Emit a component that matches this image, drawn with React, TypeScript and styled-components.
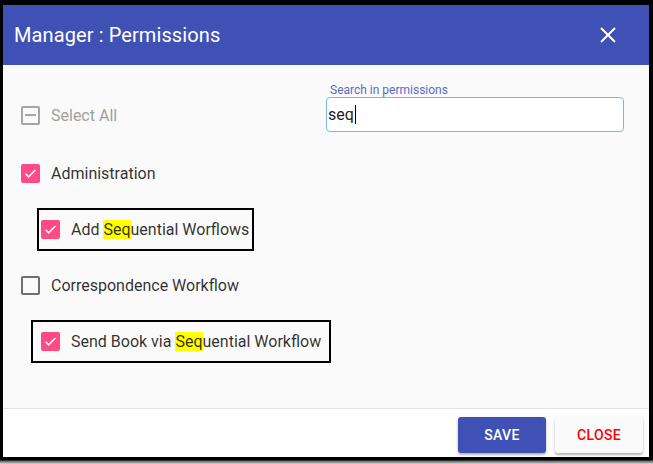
import styled, { createGlobalStyle } from 'styled-components';

const GlobalStyle = createGlobalStyle`
  html, body {
    margin: 0;
    padding: 0;
    background: #000;
    font-family: Roboto, "Liberation Sans", Arial, sans-serif;
  }
`

const Frame = styled.div`
  width: 653px;
  height: 464px;
  display: flex;
  flex-direction: column;
  overflow: hidden;
`

const Dialog = styled.div`
  margin: 5px 4px 0 3px;
  height: 452px;
  display: flex;
  flex-direction: column;
  background: #fafafa;
`

const Shade = styled.div`
  height: 7px;
  background: linear-gradient(#000 0 40%, #6a6a6a 60%, #d8d8d8 100%);
`

const Header = styled.div`
  height: 60px;
  flex-shrink: 0;
  background: #3f51b5;
  display: flex;
  align-items: center;
  justify-content: space-between;
  padding: 0 33px 0 11px;
`

const Title = styled.h2`
  margin: 0;
  color: #fff;
  font-size: 20px;
  font-weight: 400;
  letter-spacing: 0.1px;
`

const CloseIcon = styled.svg`
  width: 16px;
  height: 16px;
  margin-top: -1px;
`

const Body = styled.div`
  flex: 1;
  padding: 19px 25px 0 18px;
  border-bottom: 1px solid #e3e3e3;
  display: flex;
  flex-direction: column;
`

const TopRow = styled.div`
  display: flex;
  justify-content: space-between;
  align-items: flex-start;
`

const Row = styled.div<{ $top: number }>`
  display: flex;
  align-items: center;
  height: 24px;
  margin-top: ${p => p.$top}px;
`

const Marked = styled.div<{ $top: number; $left: number; $width: number }>`
  display: flex;
  align-items: center;
  box-sizing: border-box;
  height: 43px;
  width: ${p => p.$width}px;
  margin-top: ${p => p.$top}px;
  margin-left: ${p => p.$left}px;
  padding-left: ${p => 18 - p.$left}px;
  border: 2px solid #000;
`

const Box = styled.span<{ $state: 'on' | 'off' | 'mixed' }>`
  box-sizing: border-box;
  width: 19px;
  height: 19px;
  flex-shrink: 0;
  border-radius: 2px;
  display: flex;
  align-items: center;
  justify-content: center;
  background: ${p => (p.$state === 'on' ? '#ff4a86' : 'transparent')};
  border: ${p =>
    p.$state === 'on' ? 'none' : p.$state === 'mixed' ? '2px solid #a5a5a5' : '2px solid #6f6f6f'};
`

const Dash = styled.span`
  width: 11px;
  height: 2px;
  background: #a5a5a5;
`

const Label = styled.span<{ $muted?: boolean }>`
  margin-left: 11px;
  font-size: 16px;
  color: ${p => (p.$muted ? '#a0a0a0' : 'rgba(0, 0, 0, 0.82)')};
  white-space: nowrap;
`

const Hit = styled.span`
  background: #ffff00;
`

const Search = styled.div`
  width: 298px;
  display: flex;
  flex-direction: column;
`

const SearchLabel = styled.label`
  font-size: 12px;
  line-height: 13px;
  color: #5a6acb;
  padding-left: 4px;
`

const SearchBox = styled.div`
  box-sizing: border-box;
  height: 35px;
  border: 1px solid #7fb4ea;
  border-radius: 4px;
  background: #fff;
  display: flex;
  align-items: center;
  padding-left: 1px;
  font-size: 16px;
  color: #222;
`

const Caret = styled.span`
  width: 1px;
  height: 19px;
  background: #000;
  margin-left: 1px;
`

const Footer = styled.div`
  box-sizing: border-box;
  height: 48px;
  flex-shrink: 0;
  background: #fff;
  display: flex;
  justify-content: flex-end;
  align-items: flex-start;
  gap: 9px;
  padding: 8px 6px 0 0;
`

const Button = styled.button<{ $primary?: boolean }>`
  width: 88px;
  height: 36px;
  border: none;
  border-radius: 3px;
  font-family: Roboto, "Liberation Sans", Arial, sans-serif;
  font-size: 14px;
  font-weight: 500;
  letter-spacing: 0.3px;
  text-transform: uppercase;
  color: ${p => (p.$primary ? '#fff' : '#ff0000')};
  background: ${p => (p.$primary ? '#3f51b5' : '#fafafa')};
  box-shadow: 0 2px 2px rgba(0, 0, 0, 0.22), 0 1px 4px rgba(0, 0, 0, 0.12);
`

const Check = ({ state }: { state: 'on' | 'off' | 'mixed' }) => (
  <Box $state={state}>
    {state === 'on' && (
      <svg width="13" height="13" viewBox="0 0 24 24">
        <path d="M3 12.5l5.5 5.5L21 5.5" fill="none" stroke="#fff" strokeWidth="3" />
      </svg>
    )}
    {state === 'mixed' && <Dash />}
  </Box>
)

const App: React.FC = () => {
  return (
    <Frame>
      <GlobalStyle />
      <Dialog>
        <Header>
          <Title>Manager : Permissions</Title>
          <CloseIcon viewBox="0 0 16 16">
            <path d="M1 1L15 15M15 1L1 15" stroke="#fff" strokeWidth="2" />
          </CloseIcon>
        </Header>
        <Body>
          <TopRow>
            <Row $top={19}>
              <Check state="mixed" />
              <Label $muted>Select All</Label>
            </Row>
            <Search>
              <SearchLabel>Search in permissions</SearchLabel>
              <SearchBox>
                seq
                <Caret />
              </SearchBox>
            </Search>
          </TopRow>
          <Row $top={29}>
            <Check state="on" />
            <Label>Administration</Label>
          </Row>
          <Marked $top={23} $left={16} $width={217}>
            <Check state="on" />
            <Label>
              Add <Hit>Seq</Hit>uential Worflows
            </Label>
          </Marked>
          <Row $top={22}>
            <Check state="off" />
            <Label>Correspondence Workflow</Label>
          </Row>
          <Marked $top={23} $left={10} $width={300}>
            <Check state="on" />
            <Label>
              Send Book via <Hit>Seq</Hit>uential Workflow
            </Label>
          </Marked>
        </Body>
        <Footer>
          <Button $primary>Save</Button>
          <Button>Close</Button>
        </Footer>
      </Dialog>
      <Shade />
    </Frame>
  );
};

export default App;
